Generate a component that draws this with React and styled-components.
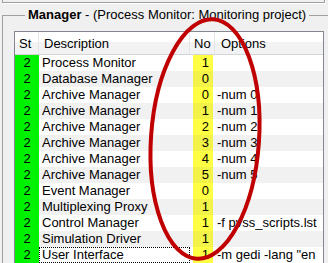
import React from 'react';
import styled, {createGlobalStyle} from 'styled-components';

const GlobalStyle = createGlobalStyle`
    body {
        margin: 0;
        background: #f0f0f0;
        font-family: "Liberation Sans", Arial, sans-serif;
        font-size: 13px;
        color: #000;
    }
`;

const Screen = styled.div`
    position: relative;
    width: 328px;
    height: 263px;
    overflow: hidden;
`;

const TopBox = styled.div`
    height: 2px;
    margin: 0 3px 0 2px;
    border: 1px solid #a0a0a0;
    border-top: none;
    box-shadow: 1px 1px 0 #fff;
`;

const Group = styled.fieldset`
    margin: 4px -30px 0 2px;
    padding: 0 0 0 11px;
    border: 1px solid #a0a0a0;
    border-right: none;
    border-bottom: none;
    min-width: 0;
`;

const Legend = styled.legend`
    margin-left: 11px;
    padding: 0 3px;
    line-height: 16px;
    white-space: nowrap;

    b {
        font-weight: bold;
    }
`;

const ListBox = styled.div`
    margin-top: 8px;
    width: 308px;
    border: 1px solid #828790;
    background: #fff;
`;

const columns = '24px 151px 25px 1fr';

const HeaderRow = styled.div`
    display: grid;
    grid-template-columns: ${columns};
    height: 22px;
    border-bottom: 1px solid #d5d5d5;
    background: linear-gradient(#ffffff 0%, #ffffff 45%, #f3f3f4 45%, #f1f2f3 100%);
`;

const HeaderCell = styled.div`
    display: flex;
    align-items: center;
    padding-left: ${p => p.$pad}px;
    border-right: ${p => (p.$last ? 'none' : '1px solid #e4e5e7')};
`;

const Row = styled.div`
    display: grid;
    grid-template-columns: ${columns};
    height: 16px;
    line-height: 16px;
    background: ${p => (p.$odd ? '#f1f1f1' : '#fff')};
`;

const StCell = styled.div`
    background: #00f200;
    text-align: center;
`;

const DescCell = styled.div`
    padding-left: 3px;
    white-space: nowrap;
    overflow: hidden;
    outline: ${p => (p.$focus ? '1px dotted #000' : 'none')};
    outline-offset: -1px;
`;

const NoCell = styled.div`
    padding: 0 2px 0 3px;
`;

const NoValue = styled.div`
    height: 100%;
    padding-right: 4px;
    text-align: right;
    background: ${p => (p.$odd ? '#f2f248' : '#ffff44')};
`;

const OptCell = styled.div`
    padding-left: 2px;
    white-space: nowrap;
    overflow: hidden;
`;

const Marker = styled.svg`
    position: absolute;
    left: 0;
    top: 0;
    pointer-events: none;
`;

const managers = [
    ['Process Monitor', 1, ''],
    ['Database Manager', 0, ''],
    ['Archive Manager', 0, '-num 0'],
    ['Archive Manager', 1, '-num 1'],
    ['Archive Manager', 2, '-num 2'],
    ['Archive Manager', 3, '-num 3'],
    ['Archive Manager', 4, '-num 4'],
    ['Archive Manager', 5, '-num 5'],
    ['Event Manager', 0, ''],
    ['Multiplexing Proxy', 1, ''],
    ['Control Manager', 1, '-f pvss_scripts.lst'],
    ['Simulation Driver', 1, ''],
    ['User Interface', 1, '-m gedi -lang "en'],
];

export default function App() {
    return (
        <Screen>
            <GlobalStyle/>
            <TopBox/>
            <Group>
                <Legend><b>Manager</b> - (Process Monitor: Monitoring project)</Legend>
                <ListBox>
                    <HeaderRow>
                        <HeaderCell $pad={4}>St</HeaderCell>
                        <HeaderCell $pad={5}>Description</HeaderCell>
                        <HeaderCell $pad={4}>No</HeaderCell>
                        <HeaderCell $pad={6} $last>Options</HeaderCell>
                    </HeaderRow>
                    {managers.map(([name, num, opts], i) => (
                        <Row key={i} $odd={i % 2 === 1}>
                            <StCell>2</StCell>
                            <DescCell $focus={i === managers.length - 1}>{name}</DescCell>
                            <NoCell><NoValue $odd={i % 2 === 1}>{num}</NoValue></NoCell>
                            <OptCell>{opts}</OptCell>
                        </Row>
                    ))}
                </ListBox>
            </Group>
            {/* red ring drawn over the No column */}
            <Marker width="328" height="263" viewBox="0 0 328 263">
                <ellipse cx="205" cy="139" rx="54" ry="120" transform="rotate(4 205 139)"
                         fill="none" stroke="#c00000" strokeWidth="4"/>
            </Marker>
        </Screen>
    );
}
